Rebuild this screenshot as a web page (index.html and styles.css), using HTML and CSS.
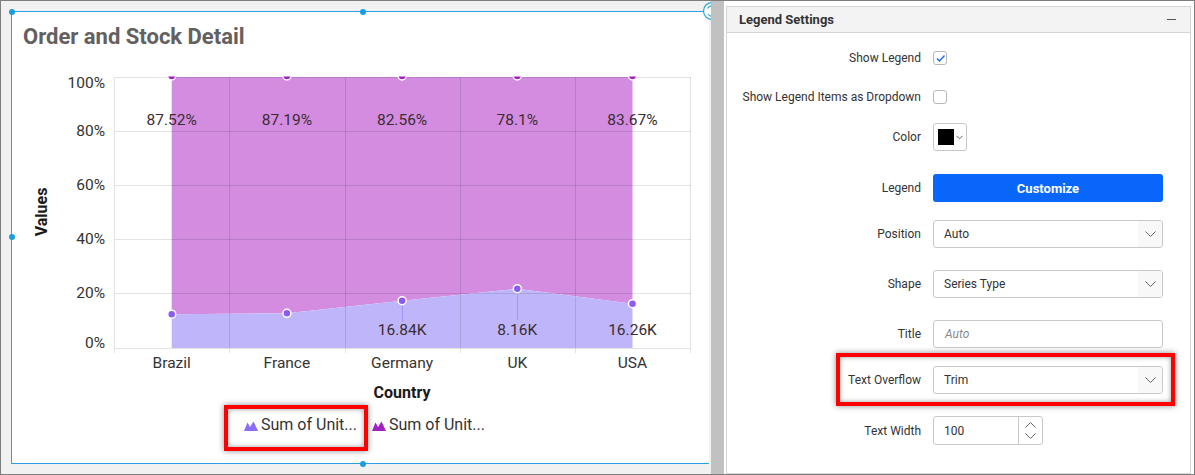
FILE: index.html
```html
<!DOCTYPE html>
<html lang="en">
<head>
<meta charset="utf-8">
<title>Order and Stock Detail</title>
<link rel="stylesheet" href="styles.css">
</head>
<body>
<div class="frame">
  <div class="canvas-pane">
    <div class="chart">
      <span class="handle h-tl"></span>
      <span class="handle h-tm"></span>
      <span class="handle h-ml"></span>
      <span class="handle h-bm"></span>
      <svg class="rotate-icon" width="20" height="20" viewBox="0 0 20 20">
        <circle cx="10" cy="10" r="8.5" fill="#fff" stroke="#29a3e0" stroke-width="1.2"/>
        <path d="M5.5 7.5 A5 5 0 0 1 14 7 M14.5 12.5 A5 5 0 0 1 6 13" fill="none" stroke="#29a3e0" stroke-width="1.2"/>
      </svg>
      <h1 class="chart-title">Order and Stock Detail</h1>
      <svg class="plot" width="697" height="352" viewBox="12 52 697 352">
        <defs>
          <clipPath id="plotClip"><rect x="114" y="76.5" width="577" height="272"/></clipPath>
        </defs>
        <polygon class="area-top" points="171.7,314.2 286.9,313.3 402.1,300.7 517.3,288.7 632.5,303.7 632.5,77 171.7,77"/>
        <polygon class="area-bottom" points="171.7,348 171.7,314.2 286.9,313.3 402.1,300.7 517.3,288.7 632.5,303.7 632.5,348"/>
        <g class="grid">
          <line x1="114" y1="77.5" x2="691" y2="77.5"/>
          <line x1="114" y1="131.5" x2="691" y2="131.5"/>
          <line x1="114" y1="185.5" x2="691" y2="185.5"/>
          <line x1="114" y1="239.5" x2="691" y2="239.5"/>
          <line x1="114" y1="293.5" x2="691" y2="293.5"/>
          <line x1="229.5" y1="77" x2="229.5" y2="348"/>
          <line x1="345.5" y1="77" x2="345.5" y2="348"/>
          <line x1="460.5" y1="77" x2="460.5" y2="348"/>
          <line x1="575.5" y1="77" x2="575.5" y2="348"/>
          <line x1="690.5" y1="77" x2="690.5" y2="348"/>
        </g>
        <g class="axis">
          <line x1="114.5" y1="77" x2="114.5" y2="353"/>
          <line x1="114" y1="348.5" x2="691" y2="348.5"/>
          <line x1="229.5" y1="348" x2="229.5" y2="353"/>
          <line x1="345.5" y1="348" x2="345.5" y2="353"/>
          <line x1="460.5" y1="348" x2="460.5" y2="353"/>
          <line x1="575.5" y1="348" x2="575.5" y2="353"/>
          <line x1="690.5" y1="348" x2="690.5" y2="353"/>
        </g>
        <g class="connector">
          <line x1="402.5" y1="301" x2="402.5" y2="322"/>
          <line x1="517.5" y1="289" x2="517.5" y2="320"/>
        </g>
        <g clip-path="url(#plotClip)">
          <circle class="mk-top" cx="171.7" cy="76" r="4"/>
          <circle class="mk-top" cx="286.9" cy="76" r="4"/>
          <circle class="mk-top" cx="402.1" cy="76" r="4"/>
          <circle class="mk-top" cx="517.3" cy="76" r="4"/>
          <circle class="mk-top" cx="632.5" cy="76" r="4"/>
        </g>
        <circle class="mk-bottom" cx="171.7" cy="314.2" r="4"/>
        <circle class="mk-bottom" cx="286.9" cy="313.3" r="4"/>
        <circle class="mk-bottom" cx="402.1" cy="300.7" r="4"/>
        <circle class="mk-bottom" cx="517.3" cy="288.7" r="4"/>
        <circle class="mk-bottom" cx="632.5" cy="303.7" r="4"/>
        <g class="ylabels">
          <text x="105" y="88.3">100%</text>
          <text x="105" y="136">80%</text>
          <text x="105" y="190">60%</text>
          <text x="105" y="244.3">40%</text>
          <text x="105" y="298.3">20%</text>
          <text x="105" y="348.3">0%</text>
        </g>
        <g class="xlabels">
          <text x="171.7" y="367.5">Brazil</text>
          <text x="286.9" y="367.5">France</text>
          <text x="402.1" y="367.5">Germany</text>
          <text x="517.3" y="367.5">UK</text>
          <text x="632.5" y="367.5">USA</text>
        </g>
        <g class="dlabels">
          <text x="171.7" y="125">87.52%</text>
          <text x="286.9" y="125">87.19%</text>
          <text x="402.1" y="125">82.56%</text>
          <text x="517.3" y="125">78.1%</text>
          <text x="632.5" y="125">83.67%</text>
          <text x="402.1" y="335">16.84K</text>
          <text x="517.3" y="335">8.16K</text>
          <text x="632.5" y="335">16.26K</text>
        </g>
        <text class="axis-title" x="402" y="398">Country</text>
        <text class="axis-title" x="46.5" y="212" transform="rotate(-90 46.5 212)">Values</text>
      </svg>
      <div class="legend">
        <div class="legend-item">
          <svg class="legend-icon" width="14" height="10" viewBox="0 0 14 10"><polygon points="0,10 3.5,1.5 6,6 9.5,0.5 14,10" fill="#8b6cf6"/></svg>
          <span>Sum of Unit...</span>
          <span class="highlight legend-highlight"></span>
        </div>
        <div class="legend-item">
          <svg class="legend-icon" width="14" height="10" viewBox="0 0 14 10"><polygon points="0,10 3.5,1.5 6,6 9.5,0.5 14,10" fill="#a020c0"/></svg>
          <span>Sum of Unit...</span>
        </div>
      </div>
    </div>
  </div>
  <div class="splitter"></div>
  <div class="props">
    <section class="panel">
      <header class="panel-head">
        <span class="panel-title">Legend Settings</span>
        <span class="collapse"></span>
      </header>
      <div class="panel-body">
        <div class="field">
          <label class="field-label">Show Legend</label>
          <span class="checkbox"><svg width="11" height="11" viewBox="0 0 11 11"><polyline points="2,5.5 4.5,8 9.5,2.5" fill="none" stroke="#1a66f0" stroke-width="1.4"/></svg></span>
        </div>
        <div class="field gap-xs">
          <label class="field-label">Show Legend Items as Dropdown</label>
          <span class="checkbox"></span>
        </div>
        <div class="field gap-s">
          <label class="field-label">Color</label>
          <span class="color-pick"><span class="swatch"></span><svg width="7" height="5" viewBox="0 0 7 5"><polyline points="0.5,0.8 3.5,3.8 6.5,0.8" fill="none" stroke="#666" stroke-width="1"/></svg></span>
        </div>
        <div class="field gap-xl">
          <label class="field-label">Legend</label>
          <button class="btn-primary">Customize</button>
        </div>
        <div class="field gap-m">
          <label class="field-label">Position</label>
          <div class="select"><span class="select-value">Auto</span><span class="select-arrow"><svg width="11" height="6" viewBox="0 0 11 6"><polyline points="0.5,0.5 5.5,5.5 10.5,0.5" fill="none" stroke="#666" stroke-width="1"/></svg></span></div>
        </div>
        <div class="field gap-l">
          <label class="field-label">Shape</label>
          <div class="select"><span class="select-value">Series Type</span><span class="select-arrow"><svg width="11" height="6" viewBox="0 0 11 6"><polyline points="0.5,0.5 5.5,5.5 10.5,0.5" fill="none" stroke="#666" stroke-width="1"/></svg></span></div>
        </div>
        <div class="field gap-l">
          <label class="field-label">Title</label>
          <div class="input"><span class="placeholder">Auto</span></div>
        </div>
        <div class="field gap-m">
          <label class="field-label">Text Overflow</label>
          <div class="select"><span class="select-value">Trim</span><span class="select-arrow"><svg width="11" height="6" viewBox="0 0 11 6"><polyline points="0.5,0.5 5.5,5.5 10.5,0.5" fill="none" stroke="#666" stroke-width="1"/></svg></span></div>
          <span class="highlight overflow-highlight"></span>
        </div>
        <div class="field field-tall gap-l">
          <label class="field-label">Text Width</label>
          <div class="numeric">
            <span class="select-value">100</span>
            <span class="spinner">
              <svg width="11" height="6" viewBox="0 0 11 6"><polyline points="0.5,5.5 5.5,0.5 10.5,5.5" fill="none" stroke="#666" stroke-width="1"/></svg>
              <svg width="11" height="6" viewBox="0 0 11 6"><polyline points="0.5,0.5 5.5,5.5 10.5,0.5" fill="none" stroke="#666" stroke-width="1"/></svg>
            </span>
          </div>
        </div>
      </div>
    </section>
  </div>
</div>
</body>
</html>
```

FILE: styles.css
```css
* { box-sizing: border-box; }
html, body { margin: 0; padding: 0; background: #fff; }
body { font-family: Roboto, "Liberation Sans", Arial, sans-serif; color: #333; }

.frame {
  width: 1195px;
  height: 475px;
  border: 1px solid #7e7e7e;
  display: flex;
  overflow: hidden;
}

/* ---------- left canvas ---------- */
.canvas-pane {
  width: 710px;
  flex: none;
  background: #f1f1f1;
  padding: 10px 0 0 10px;
  overflow: hidden;
}
.chart {
  position: relative;
  width: 698px;
  height: 453px;
  background: #fff;
  border-top: 1px solid #29a3e0;
  border-left: 1px solid #29a3e0;
  border-bottom: 1px solid #29a3e0;
}
.handle {
  position: absolute;
  width: 6px;
  height: 6px;
  border-radius: 50%;
  background: #1b9ee0;
  transform: translate(-50%, -50%);
}
.h-tl { left: -0.5px; top: -0.5px; }
.h-tm { left: 351px; top: -0.5px; }
.h-ml { left: -0.5px; top: 225px; }
.h-bm { left: 351px; top: 451.5px; }
.rotate-icon {
  position: absolute;
  left: 690px;
  top: -11px;
}

.chart-title {
  margin: 10px 0 0;
  padding-left: 11px;
  height: 30px;
  font-size: 22px;
  line-height: 30px;
  font-weight: 700;
  color: #656060;
}
.plot { display: block; overflow: visible; }
.area-top { fill: #d38ce0; }
.area-bottom { fill: #bfb5fa; }
.grid line { stroke: rgba(0, 0, 0, 0.11); stroke-width: 1; }
.axis line { stroke: #e2e2e2; stroke-width: 1; }
.connector line { stroke: #a395f4; stroke-width: 1; }
.mk-top { fill: #a11fc2; stroke: #fff; stroke-width: 1.5; }
.mk-bottom { fill: #8a5cf4; stroke: #fff; stroke-width: 1.5; }
.ylabels text { font-size: 15.5px; fill: #333; text-anchor: end; }
.xlabels text { font-size: 15.5px; fill: #333; text-anchor: middle; }
.dlabels text { font-size: 15.5px; fill: #3a2d30; text-anchor: middle; }
.axis-title { font-size: 16px; font-weight: 700; fill: #1a1a1a; text-anchor: middle; }

.legend {
  height: 42px;
  display: flex;
  align-items: center;
  justify-content: center;
  gap: 15px;
  padding-left: 8px;
}
.legend-item {
  position: relative;
  display: flex;
  align-items: center;
  gap: 3px;
  height: 20px;
  font-size: 16px;
  line-height: 20px;
  color: #333;
}
.legend-icon { display: block; margin-top: 2px; }

.highlight {
  position: absolute;
  border: 4px solid #ff0000;
  box-shadow: 0 0 6px rgba(0, 0, 0, 0.45), inset 0 0 5px rgba(0, 0, 0, 0.4);
  pointer-events: none;
}
.legend-highlight { left: -20px; right: -11px; top: -10px; bottom: -16px; }

/* ---------- splitter ---------- */
.splitter {
  width: 13px;
  flex: none;
  background: #c1c1c1;
}

/* ---------- property panel ---------- */
.props {
  flex: 1;
  background: #fff;
  padding: 5px 3px 0 2px;
  display: flex;
}
.panel {
  flex: 1;
  border: 1px solid #d5d5d5;
  display: flex;
  flex-direction: column;
}
.panel-head {
  height: 26px;
  background: #f3f3f3;
  border-bottom: 1px solid #d5d5d5;
  display: flex;
  align-items: center;
  justify-content: space-between;
  padding: 0 12px 1px 12px;
}
.panel-title { font-size: 13px; font-weight: 700; color: #333; }
.collapse { width: 9px; height: 1px; background: #555; margin-right: 2px; margin-top: 1px; }

.panel-body { padding-top: 11px; }
.field {
  position: relative;
  display: flex;
  align-items: center;
  height: 28px;
  width: 436px;
}
.field-tall { height: 29px; }
.gap-xs { margin-top: 11px; }
.gap-s { margin-top: 12px; }
.gap-m { margin-top: 18px; }
.gap-l { margin-top: 22px; }
.gap-xl { margin-top: 23px; }
.field-label {
  width: 194px;
  flex: none;
  margin-right: 12px;
  text-align: right;
  font-size: 12px;
  color: #333;
}

.checkbox {
  width: 14px;
  height: 14px;
  border: 1px solid #b8b8b8;
  border-radius: 3px;
  background: #fff;
  display: flex;
  align-items: center;
  justify-content: center;
}
.color-pick {
  width: 34px;
  height: 28px;
  border: 1px solid #c8c8c8;
  border-radius: 3px;
  display: flex;
  align-items: center;
  gap: 2px;
  padding-left: 4px;
}
.swatch { width: 16px; height: 16px; background: #000; }
.btn-primary {
  width: 230px;
  height: 28px;
  border: none;
  border-radius: 3px;
  background: #0866fa;
  color: #fff;
  font-family: inherit;
  font-size: 13px;
  font-weight: 700;
  padding: 0;
}
.select, .input, .numeric {
  height: 100%;
  border: 1px solid #c8c8c8;
  border-radius: 3px;
  display: flex;
  align-items: center;
  font-size: 12px;
  color: #333;
  overflow: hidden;
}
.select, .input { width: 230px; }
.numeric { width: 110px; }
.select-value { flex: 1; padding-left: 10px; }
.select-arrow {
  width: 24px;
  height: 100%;
  background: #f8f8f8;
  display: flex;
  align-items: center;
  justify-content: center;
}
.placeholder { padding-left: 11px; font-style: italic; color: #8a8a8a; }
.spinner {
  width: 24px;
  height: 100%;
  border-left: 1px solid #c8c8c8;
  display: flex;
  flex-direction: column;
  align-items: center;
  justify-content: center;
  gap: 5px;
}
.spinner svg { display: block; }
.overflow-highlight { left: 109px; right: -12px; top: -13px; bottom: -12px; }
```
